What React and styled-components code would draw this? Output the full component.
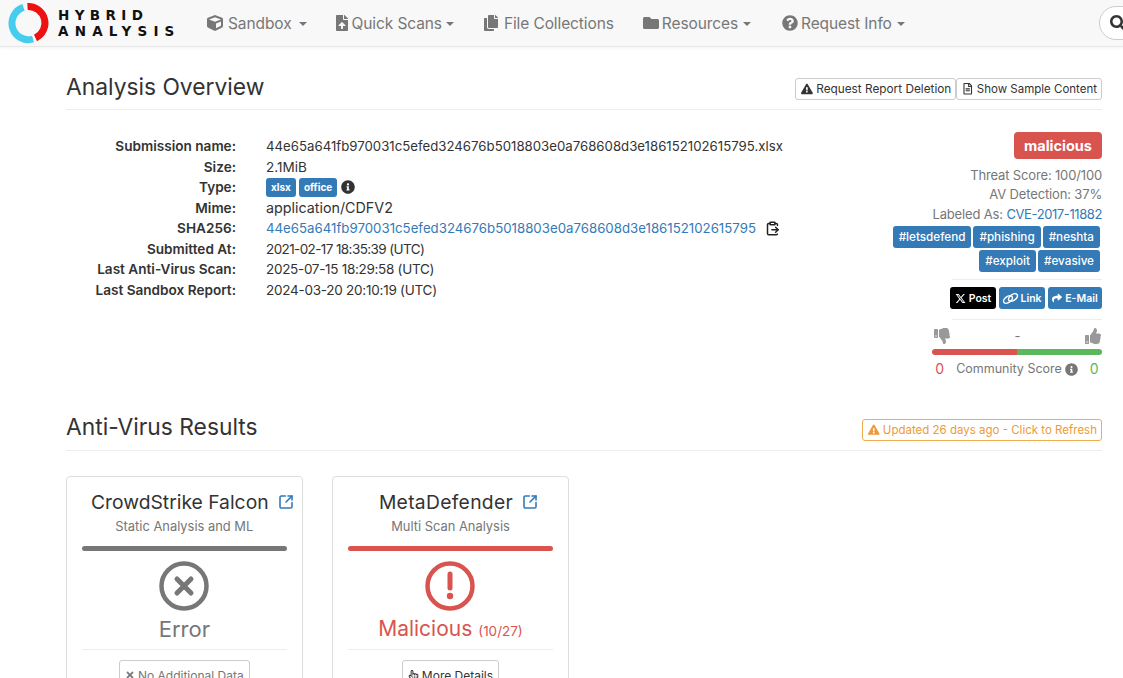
import styled, { createGlobalStyle } from 'styled-components';
import {
  FaCube, FaFileUpload, FaCopy, FaFolder, FaQuestionCircle, FaSearch,
  FaExclamationTriangle, FaRegFileAlt, FaInfoCircle,
  FaShare, FaThumbsDown, FaThumbsUp, FaRegHandPointer, FaTimes,
} from 'react-icons/fa';
import { FaXTwitter } from 'react-icons/fa6';
import { SquareArrowOutUpRight, ClipboardPaste } from 'lucide-react';

const Global = createGlobalStyle`
  html, body { margin: 0; padding: 0; height: 100%; overflow: hidden; background: #fff; }
  body { font-family: Inter, "Open Sans", sans-serif; font-size: 14px; color: #333; }
  * { box-sizing: border-box; }
`;

const Navbar = styled.nav`
  height: 47px;
  background: #f8f8f8;
  border-bottom: 1px solid #e7e7e7;
  box-shadow: 0 1px 3px rgba(0, 0, 0, 0.05);
  display: flex;
  align-items: center;
  padding-left: 8px;
  overflow: hidden;
  white-space: nowrap;
`;

const Brand = styled.div`
  display: flex;
  align-items: center;
  gap: 8px;
  width: 199px;
  flex: none;
`;

const BrandText = styled.div`
  font-family: "DejaVu Sans", sans-serif;
  font-weight: 700;
  font-size: 13.5px;
  line-height: 16px;
  color: #111;
`;

const BrandLine = styled.div`
  letter-spacing: ${(p) => p.$track}px;
`;

const NavItem = styled.a`
  display: flex;
  align-items: center;
  gap: ${(p) => p.$iconGap || 5}px;
  color: #777;
  font-size: 15.5px;
  letter-spacing: -0.1px;
  margin-right: ${(p) => p.$gap}px;
  flex: none;
  svg { font-size: 16px; }
`;

const Caret = styled.span`
  width: 0;
  height: 0;
  margin-left: 2px;
  margin-top: 2px;
  border-left: 4px solid transparent;
  border-right: 4px solid transparent;
  border-top: 4px solid #777;
`;

const SearchBox = styled.div`
  width: 60px;
  height: 34px;
  flex: none;
  margin-left: 164px;
  border: 1px solid #ccc;
  border-radius: 17px 0 0 17px;
  background: #fff;
  display: flex;
  align-items: center;
  padding-left: 10px;
  color: #333;
  font-size: 16px;
`;

const Main = styled.main`
  padding: 0 21px 0 66px;
`;

const SectionHead = styled.div`
  display: flex;
  justify-content: space-between;
  align-items: flex-end;
  height: ${(p) => p.$height}px;
  padding-bottom: 9px;
  border-bottom: 1px solid #eee;
`;

const Title = styled.h2`
  margin: 0 0 ${(p) => p.$drop}px;
  font-size: 22.8px;
  line-height: 30px;
  font-weight: 400;
  color: #333;
`;

const HeadButtons = styled.div`
  display: flex;
`;

const OutlineButton = styled.a`
  display: inline-flex;
  align-items: center;
  gap: 3px;
  height: 22px;
  padding: 0 4px 0 5px;
  border: 1px solid ${(p) => p.$color || '#ccc'};
  border-radius: 3px;
  color: ${(p) => p.$text || '#333'};
  background: #fff;
  font-size: ${(p) => p.$size || 11.8}px;
  white-space: nowrap;
`;

const Overview = styled.section`
  display: flex;
  justify-content: space-between;
  padding-top: 22px;
`;

const Facts = styled.dl`
  display: grid;
  grid-template-columns: 170px 1fr;
  column-gap: 30px;
  grid-auto-rows: 20.5px;
  margin: 4.2px 0 0;
  align-items: center;
  font-size: 13.6px;
  align-content: start;
`;

const Label = styled.dt`
  text-align: right;
  font-weight: 600;
  color: #333;
  white-space: nowrap;
`;

const Value = styled.dd`
  margin: 0;
  display: flex;
  align-items: center;
  gap: 3px;
  white-space: nowrap;
  font-size: ${(p) => p.$size || 13.5}px;
  letter-spacing: ${(p) => p.$track || 0}px;
  color: ${(p) => (p.$link ? '#337ab7' : '#333')};
`;

const Badge = styled.span`
  background: #337ab7;
  color: #fff;
  font-size: 10px;
  font-weight: 700;
  letter-spacing: 0;
  border-radius: 3px;
  height: 19px;
  padding: 0 5px;
  display: inline-flex;
  align-items: center;
`;

const TypeInfo = styled(FaInfoCircle)`
  color: #333;
  font-size: 14px;
  margin-left: 1px;
`;

const CopyIcon = styled(ClipboardPaste)`
  color: #222;
  margin-left: 6px;
`;

const Side = styled.aside`
  width: 210px;
  display: flex;
  flex-direction: column;
  align-items: flex-end;
  text-align: right;
`;

const Verdict = styled.div`
  width: 88px;
  height: 27px;
  margin-bottom: 6.5px;
  border-radius: 4px;
  background: #d9534f;
  color: #fff;
  font-size: 14.5px;
  font-weight: 700;
  display: flex;
  align-items: center;
  justify-content: center;
`;

const Stat = styled.div`
  color: #777;
  font-size: 13px;
  letter-spacing: -0.15px;
  line-height: 19.5px;
  white-space: nowrap;
`;

const BlueLink = styled.span`
  color: #337ab7;
  letter-spacing: -0.4px;
`;

const TagRow = styled.div`
  display: flex;
  justify-content: flex-end;
  gap: 2px;
  margin-top: 2px;
  padding-right: 2px;
`;

const Tag = styled.span`
  height: 22px;
  padding: 0 6px;
  background: #337ab7;
  color: #fff;
  border-radius: 3px;
  font-size: 11.7px;
  font-weight: 500;
  display: inline-flex;
  align-items: center;
`;

const Rule = styled.hr`
  width: 150px;
  border: 0;
  border-top: 1px solid #eee;
  margin: ${(p) => p.$margin};
`;

const ShareRow = styled.div`
  display: flex;
  gap: 3px;
`;

const ShareButton = styled.a`
  height: 22px;
  width: ${(p) => p.$width}px;
  display: inline-flex;
  align-items: center;
  justify-content: center;
  gap: ${(p) => p.$iconGap ?? 3}px;
  border-radius: 3px;
  color: #fff;
  font-size: 10.5px;
  font-weight: 600;
  background: ${(p) => (p.$dark ? '#000' : '#337ab7')};
`;

const Community = styled.div`
  width: 170px;
`;

const Thumbs = styled.div`
  display: flex;
  justify-content: space-between;
  align-items: center;
  height: 18px;
  color: #999;
  font-size: 16px;
  padding: 0 1px 0 2px;
`;

const Dash = styled.span`
  font-size: 13px;
  color: #777;
`;

const ScoreBar = styled.div`
  display: flex;
  height: 6px;
  margin-top: 4px;
  border-radius: 3px;
  overflow: hidden;
`;

const ScorePart = styled.div`
  flex: 1;
  background: ${(p) => p.$color};
`;

const ScoreText = styled.div`
  display: flex;
  justify-content: center;
  align-items: center;
  gap: 3px;
  margin-top: 5px;
  font-size: 12.5px;
  line-height: 18px;
  color: #777;
  white-space: nowrap;
  svg { font-size: 13px; }
`;

const ScoreNum = styled.span`
  font-size: 14px;
  color: ${(p) => p.$color};
  margin: ${(p) => p.$margin};
`;

const Cards = styled.section`
  display: flex;
  gap: 29.6px;
  margin-top: 25px;
`;

const Card = styled.article`
  width: 236.6px;
  height: 260px;
  border: 1px solid #ddd;
  border-radius: 4px;
  padding: 0 15px;
  text-align: center;
  flex: none;
`;

const CardTitle = styled.h3`
  margin: 12px 0 0;
  font-size: 19.3px;
  line-height: 26px;
  font-weight: 400;
  color: #333;
  letter-spacing: ${(p) => p.$track || 0}px;
  display: flex;
  justify-content: center;
  align-items: center;
  gap: 9px;
  padding-left: ${(p) => p.$inset || 0}px;
  white-space: nowrap;
  svg { flex: none; }
`;

const CardSub = styled.div`
  font-size: 12.9px;
  line-height: 18px;
  margin-top: 3px;
  color: #777;
`;

const CardBar = styled.div`
  height: 5px;
  border-radius: 3px;
  margin-top: 10px;
  background: ${(p) => p.$color};
`;

const CardIcon = styled.svg`
  display: block;
  margin: 10px auto 0;
`;

const Result = styled.div`
  height: 36px;
  font-size: ${(p) => p.$size || 22}px;
  line-height: 30px;
  margin-top: 3px;
  color: ${(p) => p.$color};
  border-bottom: 1px solid #eee;
  white-space: nowrap;
`;

const ResultCount = styled.small`
  font-size: 13.5px;
  line-height: 1;
`;

const CardButton = styled(OutlineButton)`
  margin-top: 10px;
  height: 30px;
  padding: 0 5px;
  font-size: 12px;
`;

const Logo = () => (
  <svg width="42" height="42" viewBox="0 0 42 42">
    <path d="M15.5 5.4 A16.5 16.5 0 0 0 25 37" fill="none" stroke="#45cdee" strokeWidth="7" />
    <path d="M19.5 4.6 A16.5 16.5 0 0 1 27.5 36" fill="none" stroke="#ee1111" strokeWidth="7" />
  </svg>
);

const ChainIcon = () => (
  <svg width="17" height="13" viewBox="0 0 17 13" fill="none" stroke="currentColor" strokeWidth="1.5">
    <ellipse cx="6" cy="7.5" rx="5" ry="3" transform="rotate(-35 6 7.5)" />
    <ellipse cx="11" cy="5.5" rx="5" ry="3" transform="rotate(-35 11 5.5)" />
  </svg>
);

const App = () => (
  <>
    <Global />
    <Navbar>
      <Brand>
        <Logo />
        <BrandText>
          <BrandLine $track={5.4}>HYBRID</BrandLine>
          <BrandLine $track={6.2}>ANALYSIS</BrandLine>
        </BrandText>
      </Brand>
      <NavItem $gap={27}><FaCube /> Sandbox <Caret /></NavItem>
      <NavItem $gap={29} $iconGap={2}><FaFileUpload /> Quick Scans <Caret /></NavItem>
      <NavItem $gap={29}><FaCopy /> File Collections</NavItem>
      <NavItem $gap={31} $iconGap={3}><FaFolder /> Resources <Caret /></NavItem>
      <NavItem $gap={30} $iconGap={3}><FaQuestionCircle /> Request Info <Caret /></NavItem>
      <SearchBox><FaSearch /></SearchBox>
    </Navbar>
    <Main>
      <SectionHead $height={63}>
        <Title $drop={-2}>Analysis Overview</Title>
        <HeadButtons>
          <OutlineButton><FaExclamationTriangle /> Request Report Deletion</OutlineButton>
          <OutlineButton $size={11.5}><FaRegFileAlt /> Show Sample Content</OutlineButton>
        </HeadButtons>
      </SectionHead>
      <Overview>
        <Facts>
          <Label>Submission name:</Label>
          <Value $size={13.22}>44e65a641fb970031c5efed324676b5018803e0a768608d3e186152102615795.xlsx</Value>
          <Label>Size:</Label>
          <Value>2.1MiB</Value>
          <Label>Type:</Label>
          <Value>
            <Badge>xlsx</Badge>
            <Badge>office</Badge>
            <TypeInfo />
          </Value>
          <Label>Mime:</Label>
          <Value $size={14.3}>application/CDFV2</Value>
          <Label>SHA256:</Label>
          <Value $link $size={13.25}>
            44e65a641fb970031c5efed324676b5018803e0a768608d3e186152102615795
            <CopyIcon size={15} strokeWidth={2.4} />
          </Value>
          <Label>Submitted At:</Label>
          <Value $track={-0.6}>2021-02-17 18:35:39 (UTC)</Value>
          <Label>Last Anti-Virus Scan:</Label>
          <Value $track={-0.3}>2025-07-15 18:29:58 (UTC)</Value>
          <Label>Last Sandbox Report:</Label>
          <Value $track={-0.25}>2024-03-20 20:10:19 (UTC)</Value>
        </Facts>
        <Side>
          <Verdict>malicious</Verdict>
          <Stat>Threat Score: 100/100</Stat>
          <Stat>AV Detection: 37%</Stat>
          <Stat>Labeled As: <BlueLink>CVE-2017-11882</BlueLink></Stat>
          <TagRow>
            <Tag>#letsdefend</Tag>
            <Tag>#phishing</Tag>
            <Tag>#neshta</Tag>
          </TagRow>
          <TagRow>
            <Tag>#exploit</Tag>
            <Tag>#evasive</Tag>
          </TagRow>
          <Rule $margin="7px 0 7px" />
          <ShareRow>
            <ShareButton $dark $width={46}><FaXTwitter size={11} /> Post</ShareButton>
            <ShareButton $width={46} $iconGap={1}><ChainIcon /> Link</ShareButton>
            <ShareButton $width={54}><FaShare size={10} /> E-Mail</ShareButton>
          </ShareRow>
          <Rule $margin="10px 0 7px" />
          <Community>
            <Thumbs>
              <FaThumbsDown />
              <Dash>-</Dash>
              <FaThumbsUp />
            </Thumbs>
            <ScoreBar>
              <ScorePart $color="#d9534f" />
              <ScorePart $color="#5cb85c" />
            </ScoreBar>
            <ScoreText>
              <ScoreNum $color="#d9534f" $margin="0 9px 0 0">0</ScoreNum>
              Community Score
              <FaInfoCircle />
              <ScoreNum $color="#5cb85c" $margin="0 0 0 9px">0</ScoreNum>
            </ScoreText>
          </Community>
        </Side>
      </Overview>
      <SectionHead $height={73}>
        <Title $drop={-1}>Anti-Virus Results</Title>
        <OutlineButton $color="#f0ad4e" $text="#ee9a3a" $size={11.5}>
          <FaExclamationTriangle /> Updated 26 days ago - Click to Refresh
        </OutlineButton>
      </SectionHead>
      <Cards>
        <Card>
          <CardTitle $inset={16}>
            CrowdStrike Falcon
            <SquareArrowOutUpRight size={16} color="#337ab7" strokeWidth={2.4} />
          </CardTitle>
          <CardSub>Static Analysis and ML</CardSub>
          <CardBar $color="#777" />
          <CardIcon width="50" height="50" viewBox="0 0 50 50">
            <circle cx="25" cy="25" r="22.5" fill="none" stroke="#777" strokeWidth="4.5" />
            <path d="M18 18 L32 32 M32 18 L18 32" stroke="#777" strokeWidth="5" strokeLinecap="round" />
          </CardIcon>
          <Result $color="#777">Error</Result>
          <CardButton $text="#777"><FaTimes size={10} /> No Additional Data</CardButton>
        </Card>
        <Card>
          <CardTitle $track={0.3} $inset={16}>
            MetaDefender
            <SquareArrowOutUpRight size={16} color="#337ab7" strokeWidth={2.4} />
          </CardTitle>
          <CardSub>Multi Scan Analysis</CardSub>
          <CardBar $color="#d9534f" />
          <CardIcon width="50" height="50" viewBox="0 0 50 50">
            <circle cx="25" cy="25" r="22.5" fill="none" stroke="#d9534f" strokeWidth="4.5" />
            <path d="M25 13 V27" stroke="#d9534f" strokeWidth="5" strokeLinecap="round" />
            <circle cx="25" cy="35" r="3.2" fill="#d9534f" />
          </CardIcon>
          <Result $color="#d9534f" $size={21}>Malicious <ResultCount>(10/27)</ResultCount></Result>
          <CardButton><FaRegHandPointer size={11} /> More Details</CardButton>
        </Card>
      </Cards>
    </Main>
  </>
);

export default App;
